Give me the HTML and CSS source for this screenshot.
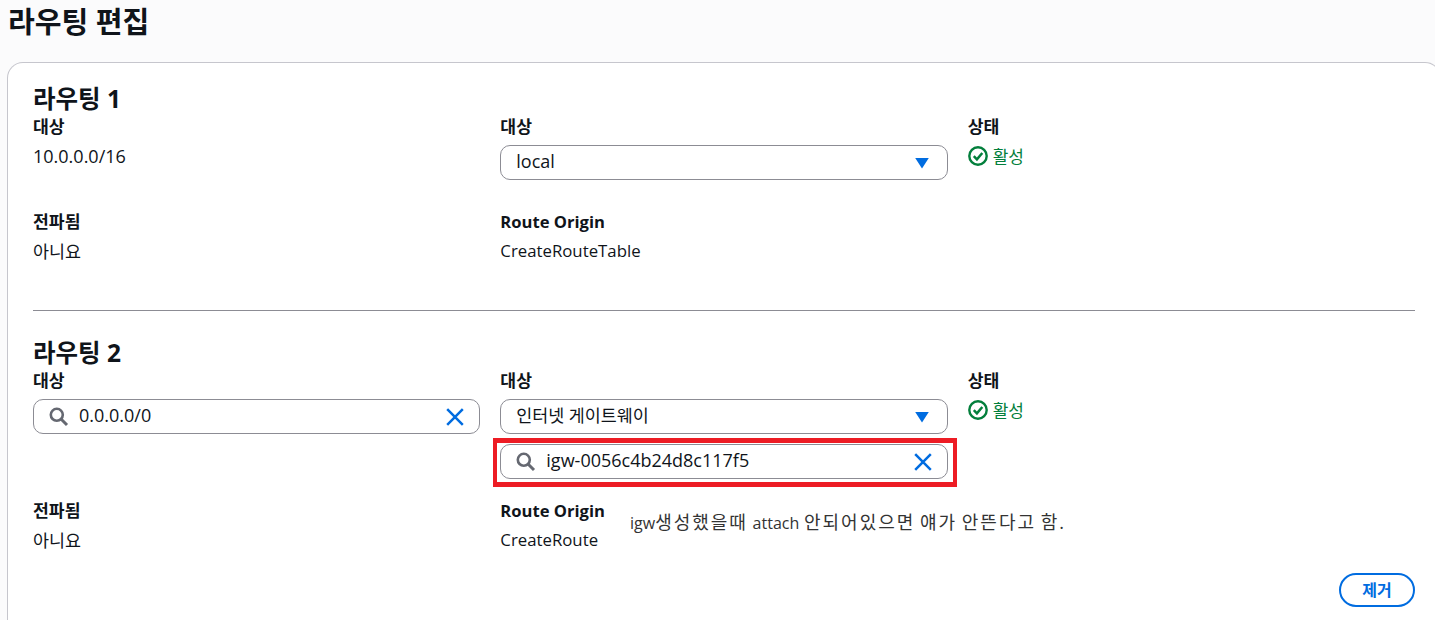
FILE: index.html
```html
<!DOCTYPE html>
<html lang="ko">
<head>
<meta charset="utf-8">
<title>라우팅 편집</title>
<link rel="stylesheet" href="styles.css">
</head>
<body>
<h1 class="page-title">라우팅 편집</h1>
<main class="card">
  <section class="route route-first">
    <h2 class="route-title">라우팅 1</h2>
    <div class="route-grid">
      <div class="field"><div class="label">대상</div><div class="value value-num">10.0.0.0/16</div></div>
      <div class="field"><div class="label">대상</div>
        <div class="control"><span class="control-text select-text">local</span>
          <svg class="caret" viewBox="0 0 16 16"><path d="M1.2 3h13.6L8 13.5z" fill="#006ce0"/></svg>
        </div>
      </div>
      <div class="field"><div class="label">상태</div>
        <div class="status">
          <svg class="check" viewBox="0 0 20 20"><circle cx="10" cy="10" r="8.7" fill="none" stroke="#037f3c" stroke-width="2.4"/><path d="M5.8 10.2l3.1 3.1 5.4-6.3" fill="none" stroke="#037f3c" stroke-width="2.5"/></svg>
          <span class="status-text">활성</span>
        </div>
      </div>
    </div>
    <div class="route-grid meta-row">
      <div class="field"><div class="label">전파됨</div><div class="value">아니요</div></div>
      <div class="field"><div class="label label-latin">Route Origin</div><div class="value value-latin">CreateRouteTable</div></div>
    </div>
  </section>

  <section class="route">
    <h2 class="route-title">라우팅 2</h2>
    <div class="route-grid">
      <div class="field"><div class="label">대상</div>
        <div class="control">
          <svg class="search" viewBox="0 0 20 20"><circle cx="7.8" cy="7.8" r="6" fill="none" stroke="#656871" stroke-width="2.6"/><path d="M12 12l6 6" stroke="#656871" stroke-width="3" fill="none"/></svg>
          <span class="control-text">0.0.0.0/0</span>
          <svg class="clear" viewBox="0 0 20 20"><path d="M2.2 2.2l15.6 15.6M17.8 2.2L2.2 17.8" stroke="#006ce0" stroke-width="2.5" fill="none"/></svg>
        </div>
      </div>
      <div class="field"><div class="label">대상</div>
        <div class="control"><span class="control-text select-text select-ko">인터넷 게이트웨이</span>
          <svg class="caret" viewBox="0 0 16 16"><path d="M1.2 3h13.6L8 13.5z" fill="#006ce0"/></svg>
        </div>
        <div class="control control-stacked">
          <svg class="search" viewBox="0 0 20 20"><circle cx="7.8" cy="7.8" r="6" fill="none" stroke="#656871" stroke-width="2.6"/><path d="M12 12l6 6" stroke="#656871" stroke-width="3" fill="none"/></svg>
          <span class="control-text">igw-0056c4b24d8c117f5</span>
          <svg class="clear" viewBox="0 0 20 20"><path d="M2.2 2.2l15.6 15.6M17.8 2.2L2.2 17.8" stroke="#006ce0" stroke-width="2.5" fill="none"/></svg>
          <div class="highlight"></div>
        </div>
      </div>
      <div class="field"><div class="label">상태</div>
        <div class="status">
          <svg class="check" viewBox="0 0 20 20"><circle cx="10" cy="10" r="8.7" fill="none" stroke="#037f3c" stroke-width="2.4"/><path d="M5.8 10.2l3.1 3.1 5.4-6.3" fill="none" stroke="#037f3c" stroke-width="2.5"/></svg>
          <span class="status-text">활성</span>
        </div>
      </div>
    </div>
    <div class="route-grid meta-row meta-row-tight">
      <div class="field"><div class="label">전파됨</div><div class="value">아니요</div></div>
      <div class="field"><div class="label label-latin">Route Origin</div><div class="value value-latin">CreateRoute</div></div>
    </div>
    <div class="actions"><button class="remove" type="button">제거</button></div>
  </section>
  <p class="annotation"><span class="latin">igw</span>생성했을때 <span class="latin">attach</span> 안되어있으면 얘가 안뜬다고 함.</p>
</main>
</body>
</html>
```
FILE: styles.css
```css
* { box-sizing: border-box; }
html, body { height: 620px; overflow: hidden; }
body {
  margin: 0;
  background: #fbfbfc;
  color: #0f141a;
  font-family: "Open Sans", "Noto Sans CJK KR", sans-serif;
  font-size: 16px;
  line-height: 22px;
}
.page-title {
  margin: 0;
  height: 62px;
  padding: 4px 0 0 8px;
  font-size: 29.1px;
  line-height: 36px;
  font-weight: 700;
}
.card {
  position: relative;
  width: 1434px;
  height: 558px;
  margin-left: 7px;
  padding: 23px 25px 0;
  background: #fff;
  border: 1px solid #c6c6cd;
  border-bottom: 0;
  border-radius: 16px 16px 0 0;
}
.route-first {
  height: 225px;
  border-bottom: 1px solid #8c8c94;
  margin-bottom: 29px;
}
.route-title {
  margin: 0 0 4px;
  font-size: 24.5px;
  line-height: 26px;
  font-weight: 700;
}
.route-grid {
  display: grid;
  grid-template-columns: repeat(3, 1fr);
  column-gap: 20px;
}
.meta-row { margin-top: 31px; }
.meta-row-tight { margin-top: 21px; }
.label {
  font-size: 17.2px;
  line-height: 22px;
  font-weight: 700;
  margin-bottom: 7px;
}
.label-latin { font-size: 16.6px; }
.value { font-size: 17.4px; line-height: 22px; }
.value-num { font-size: 18px; margin-top: 1px; }
.value-latin { font-size: 16.8px; }
.control {
  position: relative;
  display: flex;
  align-items: center;
  height: 35px;
  padding: 0 10px 0 15px;
  background: #fff;
  border: 1px solid #8c8c94;
  border-radius: 10px;
  font-size: 18px;
  line-height: 22px;
}
.control-stacked { margin-top: 10px; }
.control-text { flex: 1; padding-left: 10px; position: relative; top: -2px; }
.select-text { padding-left: 0; }
.select-ko { font-size: 17.4px; }
.caret { width: 16px; height: 16px; margin-right: 7px; }
.search { width: 20px; height: 20px; }
.clear { width: 20px; height: 20px; margin-right: 4px; }
.highlight {
  position: absolute;
  top: -7px;
  right: -10px;
  bottom: -9px;
  left: -8px;
  border-style: solid;
  border-color: #ed1c24;
  border-width: 5px 4px;
  pointer-events: none;
}
.status {
  display: flex;
  align-items: center;
  gap: 5px;
  margin-top: 1px;
  color: #037f3c;
  font-size: 17px;
  line-height: 22px;
}
.status-text { position: relative; top: 1px; }
.check { width: 20px; height: 20px; }
.actions { display: flex; justify-content: flex-end; margin-top: 22px; }
.remove {
  width: 76px;
  height: 34px;
  padding: 0;
  background: #fff;
  border: 2px solid #006ce0;
  border-radius: 20px;
  color: #006ce0;
  font: 700 16px/20px "Open Sans", "Noto Sans CJK KR", sans-serif;
}
.annotation {
  position: absolute;
  left: 622px;
  top: 449px;
  margin: 0;
  color: #333;
  font-size: 18px;
  line-height: 20px;
  letter-spacing: 2px;
  word-spacing: -2px;
}
.latin { font-size: 16px; letter-spacing: 0; }
```
